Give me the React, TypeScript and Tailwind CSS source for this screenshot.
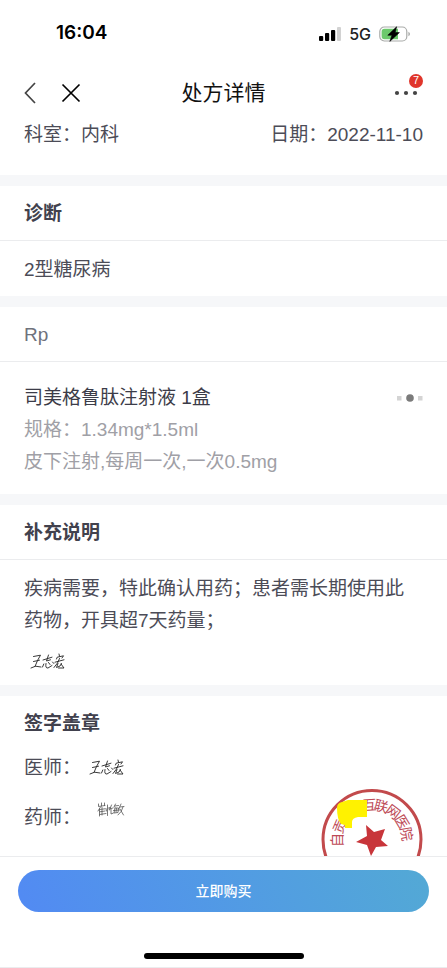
import type { ReactNode } from "react";

interface SectionProps {
  title: string;
  muted?: boolean;
  children: ReactNode;
}

const SEAL_CHARS = [
  { char: "自", angle: -90 },
  { char: "贡", angle: -67 },
  { char: "互", angle: -4 },
  { char: "联", angle: 15 },
  { char: "网", angle: 37 },
  { char: "医", angle: 59 },
  { char: "院", angle: 80 },
];

function StatusBar() {
  return (
    <div className="flex h-[67px] items-center justify-between pl-14 pr-9">
      <span className="font-['Inter',sans-serif] text-[19px] font-semibold text-black">16:04</span>
      <div className="flex items-center gap-2">
        <svg width="23" height="14" viewBox="0 0 23 14" aria-hidden="true">
          <rect x="1" y="9" width="4.2" height="5" rx="1" fill="#000" />
          <rect x="7" y="6" width="4.2" height="8" rx="1" fill="#000" />
          <rect x="13" y="3" width="4.2" height="11" rx="1" fill="#000" />
          <rect x="19" y="0" width="4" height="14" rx="1" fill="#d2d2d2" />
        </svg>
        <span className="font-['Inter',sans-serif] text-base font-medium text-[#222]">5G</span>
        <svg width="32" height="16" viewBox="0 0 32 16" aria-hidden="true">
          <rect x="0.8" y="1" width="27" height="14" rx="4.5" fill="#fff" stroke="#a9aba9" strokeWidth="1.2" />
          <path d="M5.5 2.8H19V13.2H5.5Q2.6 13.2 2.6 10V6Q2.6 2.8 5.5 2.8Z" fill="#6cc96c" />
          <path d="M29.4 5.8Q31 6.5 31 8T29.4 10.2Z" fill="#a9aba9" />
          <path d="M17.6 0.8L8.8 9.2H13L10.8 15.4L20.4 6.6H16.2Z" fill="#000" stroke="#000" strokeWidth="0.6" />
        </svg>
      </div>
    </div>
  );
}

function NavBar() {
  return (
    <header className="grid h-[51px] grid-cols-[1fr_auto_1fr] items-center px-6">
      <div className="flex items-center gap-6">
        <button type="button" aria-label="返回" className="text-[#444]">
          <svg width="13" height="22" viewBox="0 0 13 22" fill="none" stroke="currentColor" strokeWidth="1.7">
            <path d="M11 1L1.5 11L11 21" />
          </svg>
        </button>
        <button type="button" aria-label="关闭" className="text-black">
          <svg width="20" height="20" viewBox="0 0 20 20" fill="none" stroke="currentColor" strokeWidth="1.7">
            <path d="M1.5 1.5L18.5 18.5M18.5 1.5L1.5 18.5" />
          </svg>
        </button>
      </div>
      <h1 className="text-[21px] leading-7 text-[#111]">处方详情</h1>
      <button type="button" aria-label="更多" className="relative justify-self-end p-1">
        <svg width="25" height="6" viewBox="0 0 25 6" fill="#444" aria-hidden="true">
          <circle cx="3" cy="3" r="2.1" />
          <circle cx="12" cy="3" r="2.1" />
          <circle cx="21" cy="3" r="2.1" />
        </svg>
        <span className="absolute -top-3 right-0 flex size-[14px] items-center justify-center rounded-full bg-[#e0352b] text-[11px] leading-none text-white">
          7
        </span>
      </button>
    </header>
  );
}

function Band() {
  return <div className="h-[11px] bg-[#f6f7f9]" />;
}

function Section({ title, muted, children }: SectionProps) {
  return (
    <section>
      <h2
        className={
          muted
            ? "border-b border-[#ebecee] px-6 pt-[14px] pb-3 text-[19px] leading-7 text-[#6f727c]"
            : "border-b border-[#ebecee] px-6 pt-[14px] pb-3 text-[19px] leading-7 font-bold text-[#41414d]"
        }
      >
        {title}
      </h2>
      {children}
    </section>
  );
}

function DoctorSignature() {
  return (
    <svg
      width="36"
      height="18"
      viewBox="0 0 36 18"
      fill="none"
      stroke="#222"
      strokeWidth="0.9"
      strokeLinecap="round"
      strokeLinejoin="round"
      role="img"
      aria-label="医师签名"
    >
      <path d="M3.5 3.5L10.5 2.2L7.5 7.5L5 13.5M3.5 8.5L9.5 7.2M1 15L5.5 13.2L11 14" />
      <path d="M13 7L22 4.2M18.5 2L16.5 8L20.5 6.8M13.8 11L12.5 14M16 10.5Q15 15.5 18 15L22 12.5M18.5 9.5L20 11.5M22.5 9L23.8 10.5" />
      <path d="M29 1L29.5 3.2M26.5 6L27.2 4.2L33.5 2.8L32 5M25 9.2L34 6.8M29.5 5.5L27.5 10L24 14.5M28 10.5L26.5 14.5L30 13L31.5 10.5M31 11L34 15L28.5 15" />
    </svg>
  );
}

function PharmacistSignature() {
  return (
    <svg
      width="28"
      height="16"
      viewBox="0 0 28 16"
      fill="none"
      stroke="#555"
      strokeWidth="0.8"
      strokeLinecap="round"
      strokeLinejoin="round"
      role="img"
      aria-label="药师签名"
    >
      <path d="M1.5 2V4.5L8 3.5M4.5 1V4M7.5 1V3.5M3.5 5L1 9M2.5 7V14M5 5.5V13M2.8 7.5L8 6.8M2.8 9.8L8 9M2.8 12.5L9 11.5" />
      <path d="M10.5 3V13.5M9 6.5L9.5 9M11.5 6L13 5.5M14.5 3L12.5 8M12 7L16 6M14 7V12L16.5 11" />
      <path d="M18.5 2L17 5M17.8 4L21.5 3.5M18 6L17 11L21 10.5L21.5 6L18 6M16.5 8.5L22.5 8M19.5 6.5L19 10M24 2L22 6.5M23 5L27 4.5M26 5Q25 10 21 13M23 7L26.5 13" />
    </svg>
  );
}

function HospitalSeal() {
  return (
    <svg width="102" height="102" viewBox="0 0 102 102" role="img" aria-label="互联网医院印章">
      <circle cx="51" cy="51.5" r="49" fill="none" stroke="#c24a4c" strokeWidth="3" />
      {SEAL_CHARS.map(({ char, angle }) => (
        <text
          key={char}
          x="51"
          y="22"
          fontSize="14"
          fill="#bd4a56"
          textAnchor="middle"
          transform={`rotate(${angle} 51 52)`}
        >
          {char}
        </text>
      ))}
      <path d="M45 37L53 44L64 41L60 52L67 58L55 59L50 68L46 57L35 54L46 48Z" fill="#c8353a" />
      <path d="M16 20Q16 15 21 14L27 12H46V29H37Q31 30 31 34V40H24V37L20 36Q16 31 16 20Z" fill="#fff200" />
    </svg>
  );
}

export default function App() {
  return (
    <div className="flex min-h-screen flex-col border-b border-[#ebecee] bg-white font-['Liberation_Sans','Noto_Sans_CJK_SC',sans-serif] text-[19px] text-[#4c4c57]">
      <StatusBar />
      <NavBar />

      <main>
        <div className="flex justify-between px-6 pt-[3px] pb-[26px] leading-7">
          <span>科室：内科</span>
          <span>日期：2022-11-10</span>
        </div>

        <Band />
        <Section title="诊断">
          <p className="px-6 pt-[15px] pb-3 leading-7">2型糖尿病</p>
        </Section>

        <Band />
        <Section title="Rp" muted>
          <div className="px-6 pt-5 pb-4 leading-8">
            <div className="flex items-center justify-between">
              <h3 className="text-[#3c3c48]">司美格鲁肽注射液 1盒</h3>
              <button type="button" aria-label="更多操作">
                <svg width="27" height="8" viewBox="0 0 27 8" aria-hidden="true">
                  <rect x="1" y="2" width="4.5" height="4.5" fill="#d4d4d4" />
                  <circle cx="14" cy="4" r="3.8" fill="#7b7b7b" />
                  <rect x="22" y="2" width="4.5" height="4.5" fill="#d4d4d4" />
                </svg>
              </button>
            </div>
            <p className="text-[#a0a0a6]">规格：1.34mg*1.5ml</p>
            <p className="text-[#a0a0a6]">皮下注射,每周一次,一次0.5mg</p>
          </div>
        </Section>

        <Band />
        <Section title="补充说明">
          <div className="pt-[13px] pr-8 pb-[14px] pl-6">
            <p className="leading-8">疾病需要，特此确认用药；患者需长期使用此药物，开具超7天药量；</p>
            <div className="mt-4 ml-[6px]">
              <DoctorSignature />
            </div>
          </div>
        </Section>

        <Band />
        <section className="relative overflow-hidden px-6 pt-3 pb-[22px]">
          <h2 className="leading-8 font-bold text-[#41414d]">签字盖章</h2>
          <div className="mt-3 flex items-center gap-2 leading-8">
            <span>医师：</span>
            <DoctorSignature />
          </div>
          <div className="mt-[18px] flex items-start gap-4 leading-8">
            <span>药师：</span>
            <PharmacistSignature />
          </div>
          <div className="absolute top-[92px] right-6">
            <HospitalSeal />
          </div>
        </section>
      </main>

      <footer className="flex grow flex-col border-t border-[#ebecee] px-[18px] pt-[13px]">
        <button
          type="button"
          className="h-[42px] w-full rounded-full bg-linear-65 from-[#528af3] to-[#53a9d5] text-sm font-medium text-white"
        >
          立即购买
        </button>
        <div className="mx-auto mt-auto mb-2 h-[6px] w-40 rounded-full bg-black" />
      </footer>
    </div>
  );
}
